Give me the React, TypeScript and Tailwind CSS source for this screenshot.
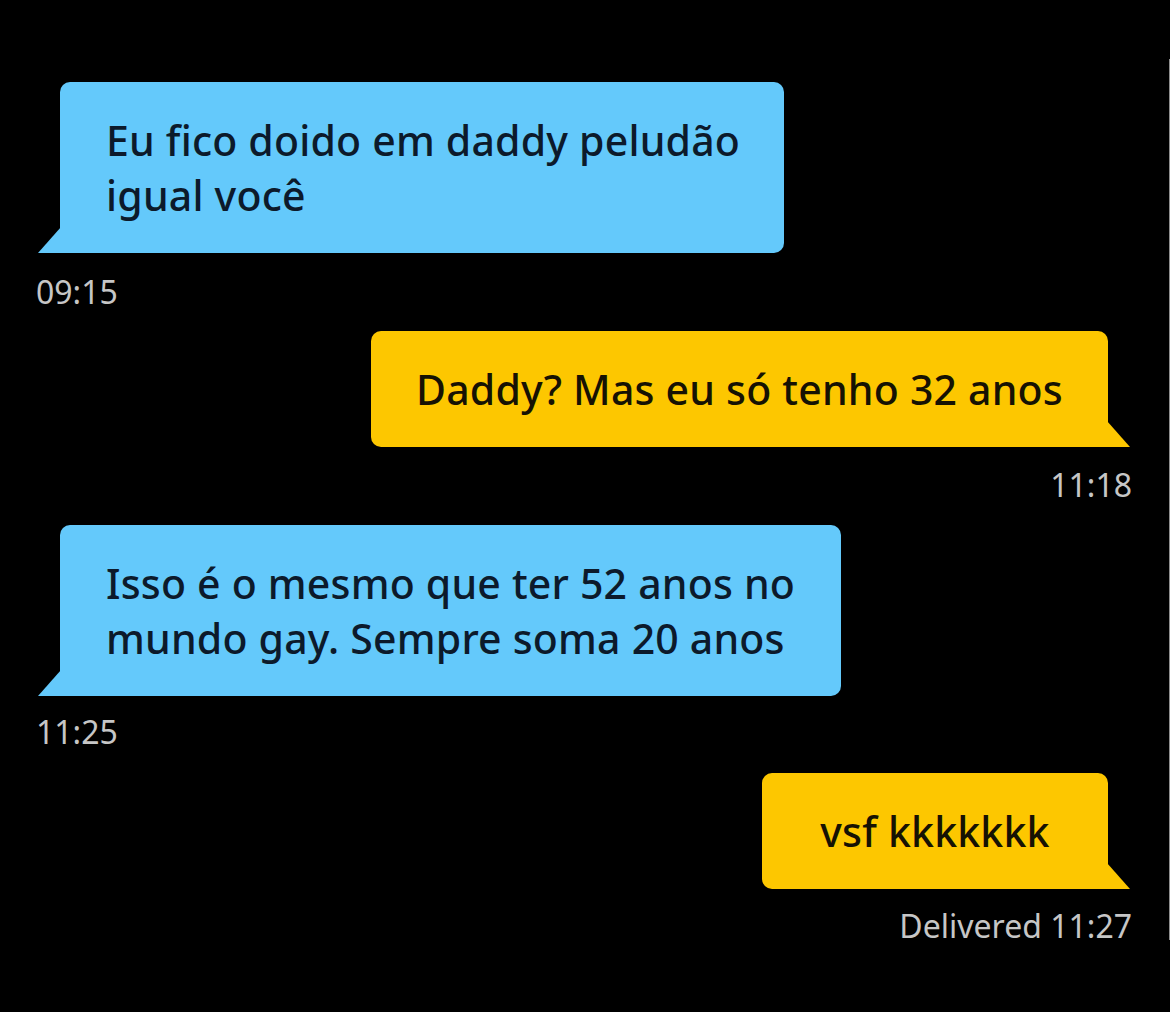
const FONT = "font-['Noto_Sans',sans-serif]";

type Msg = {
  text: string[];
  time: string;
  mine: boolean;
  width: string;
  gap: string;
};

const messages: Msg[] = [
  { text: ['Eu fico doido em daddy peludão', 'igual você'], time: '09:15', mine: false, width: 'w-[724px]', gap: 'mt-[21px] mb-[21px]' },
  { text: ['Daddy? Mas eu só tenho 32 anos'], time: '11:18', mine: true, width: 'w-[737px]', gap: 'mt-[20px] mb-[22px]' },
  { text: ['Isso é o mesmo que ter 52 anos no', 'mundo gay. Sempre soma 20 anos'], time: '11:25', mine: false, width: 'w-[781px]', gap: 'mt-[18px] mb-[23px]' },
  { text: ['vsf kkkkkkk'], time: 'Delivered 11:27', mine: true, width: 'w-[346px]', gap: 'mt-[19px]' },
];

const Bubble = ({ msg }: { msg: Msg }) => {
  const color = msg.mine ? 'bg-[#fdc700] text-[#161203]' : 'bg-[#64c9fb] text-[#0c1a2b]';
  return (
    <div className={`flex flex-col ${msg.mine ? 'items-end pr-[61px]' : 'items-start pl-[60px]'}`}>
      <div
        className={`relative ${msg.width} ${color} ${
          msg.mine ? 'rounded-[10px] rounded-br-none' : 'rounded-[10px] rounded-bl-none'
        } px-[44px] pt-[31px] pb-[30px] text-[41px] leading-[55px] font-medium tracking-[0.2px] whitespace-nowrap`}
      >
        {msg.text.map((line) => (
          <div key={line} className={msg.mine ? 'text-center' : 'pl-[2px]'}>
            {line}
          </div>
        ))}
        {msg.mine ? (
          <svg className="absolute -right-[23px] bottom-0" width="24" height="26" viewBox="0 0 24 26">
            <polygon points="0,0 23,26 0,26" fill="#fdc700" />
          </svg>
        ) : (
          <svg className="absolute -left-[23px] bottom-0" width="24" height="26" viewBox="0 0 24 26">
            <polygon points="24,0 24,26 1,26" fill="#64c9fb" />
          </svg>
        )}
      </div>
    </div>
  );
};

export default function App() {
  return (
    <div className={`w-[1170px] h-[1012px] bg-black ${FONT} overflow-hidden flex`}>
      <div className="flex-1 flex flex-col pt-[82px]">
        {messages.map((msg, i) => (
          <div key={i} className="flex flex-col">
            <Bubble msg={msg} />
            <div
              className={`${msg.gap} text-[32px] leading-[36px] text-[#c6c6c6] ${
                msg.mine ? 'self-end pr-[37px]' : 'self-start pl-[36px]'
              }`}
            >
              {msg.time}
            </div>
          </div>
        ))}
      </div>
      <div className="w-px h-[881px] mt-[59px] bg-[#8e8e8e]" />
    </div>
  );
}
